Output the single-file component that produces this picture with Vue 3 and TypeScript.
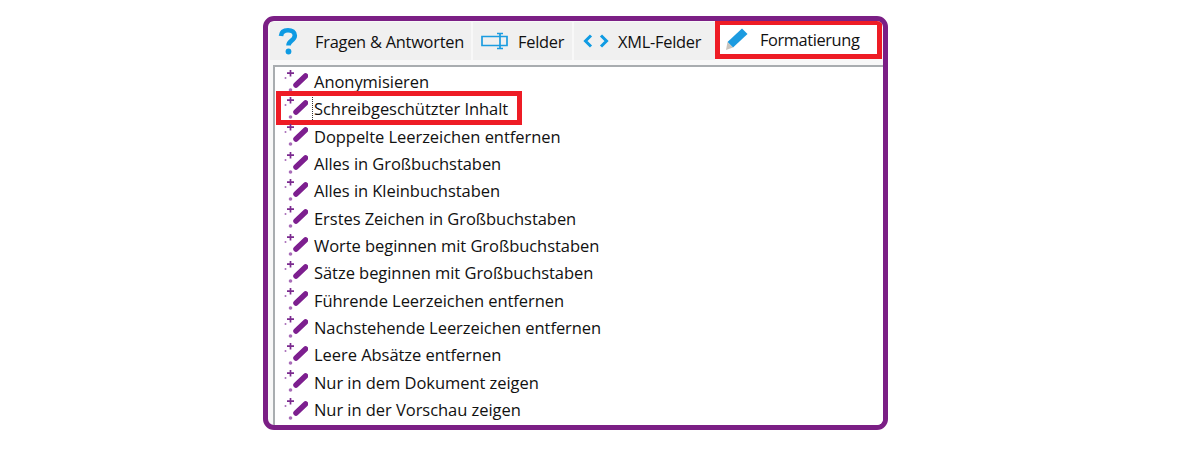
<script setup lang="ts">
const actions: string[] = [
  'Anonymisieren',
  'Schreibgeschützter Inhalt',
  'Doppelte Leerzeichen entfernen',
  'Alles in Großbuchstaben',
  'Alles in Kleinbuchstaben',
  'Erstes Zeichen in Großbuchstaben',
  'Worte beginnen mit Großbuchstaben',
  'Sätze beginnen mit Großbuchstaben',
  'Führende Leerzeichen entfernen',
  'Nachstehende Leerzeichen entfernen',
  'Leere Absätze entfernen',
  'Nur in dem Dokument zeigen',
  'Nur in der Vorschau zeigen',
]
</script>

<template>
  <div class="page">
    <div class="frame">
      <div class="tabs">
        <div class="tab tab-qa">
          <svg class="icon-help" width="20" height="28" viewBox="0 0 20 28">
            <path d="M3 9C3.300 5 6 3.200 10 3.200c4 0 6.800 2.100 6.800 5.300 0 2.700-1.600 4-3.500 5.400-1.900 1.400-2.800 2.300-2.800 4.600" fill="none" stroke="#0f9be3" stroke-width="4.600" />
            <circle cx="10.500" cy="24.500" r="2.900" fill="#0f9be3" />
          </svg>
          <span>Fragen &amp; Antworten</span>
        </div>
        <div class="tab tab-fields">
          <svg width="28" height="18" viewBox="0 0 28 18">
            <path d="M1 4.500h25v9H1zM16 1.500h6M19 1.500v15M16 16.500h6" fill="none" stroke="#1b9ce0" stroke-width="1.700" />
          </svg>
          <span>Felder</span>
        </div>
        <div class="tab tab-xml">
          <svg width="26" height="14" viewBox="0 0 26 14">
            <path d="M8 1.500 2.500 7 8 12.500M18 1.500 23.500 7 18 12.500" fill="none" stroke="#0f9be3" stroke-width="3" />
          </svg>
          <span>XML-Felder</span>
        </div>
        <div class="tab tab-format">
          <svg width="24" height="24" viewBox="0 0 24 24">
            <path d="M17 1.500 22.500 7 8 20.500 2.500 15z" fill="#1c9be0" />
            <path d="M2.500 15 8 20.500 1 23z" fill="#c9c4bd" />
          </svg>
          <span>Formatierung</span>
          <div class="mark mark-tab"></div>
        </div>
      </div>
      <ul class="list">
        <li v-for="(label, i) in actions" :key="label" class="row">
          <svg class="wand" width="24" height="24" viewBox="0 0 24 24">
            <path d="M6.500 0v6.500M3 3.200h7" stroke="#7b2a8f" stroke-width="1.700" />
            <path d="M21.500 6 12 15" stroke="#7d1f8f" stroke-width="5.500" stroke-linecap="round" />
            <circle cx="6.500" cy="20" r="1.800" fill="#a86cb8" />
            <circle cx="1.500" cy="8" r="1" fill="#a86cb8" />
          </svg>
          <span class="label" :class="{ focused: i === 1 }">{{ label }}</span>
          <div v-if="i === 1" class="mark mark-row"></div>
        </li>
      </ul>
    </div>
  </div>
</template>

<style scoped>
.page {
  width: 1200px;
  height: 460px;
  box-sizing: border-box;
  padding-top: 16px;
  padding-left: 263px;
  background: #fff;
}

.frame {
  width: 625px;
  height: 414px;
  box-sizing: border-box;
  border: 5px solid #7b1f85;
  border-radius: 11px;
  background: #f8f8f8;
  overflow: hidden;
  font-family: "Open Sans", "Noto Sans", sans-serif;
  color: #111;
}

.tabs {
  display: flex;
  height: 39px;
  padding-top: 1px;
  gap: 2px;
  box-sizing: border-box;
  margin-left: 2px;
}

.tab {
  display: flex;
  align-items: center;
  background: #f0f0f0;
  font-size: 16.4px;
  letter-spacing: -0.25px;
  white-space: nowrap;
  position: relative;
}

.tab-qa {
  width: 201px;
  padding-left: 8px;
  gap: 17px;
  box-sizing: border-box;
}

.tab-fields {
  width: 99px;
  padding-left: 8px;
  gap: 9px;
  box-sizing: border-box;
}

.tab-xml {
  width: 141px;
  padding-left: 9px;
  gap: 9px;
  box-sizing: border-box;
}

.tab-format {
  width: 161px;
  padding-left: 8px;
  gap: 11px;
  box-sizing: border-box;
  background: #fff;
  margin-top: -1px;
  height: 36px;
  letter-spacing: -0.4px;
}

.list {
  list-style: none;
  margin: 5px 0 0 5px;
  padding: 1px 0 0 9px;
  height: 400px;
  background: #fff;
  border-top: 2px solid #a9adb0;
  border-left: 2px solid #a9adb0;
}

.row {
  display: flex;
  align-items: center;
  height: 27.33px;
  gap: 5px;
  position: relative;
  font-size: 16.5px;
  letter-spacing: -0.05px;
  white-space: nowrap;
}

.wand {
  flex: none;
}

.label {
  padding-left: 1px;
}

.focused {
  margin-left: -1px;
  border-left: 1px dotted #333;
}

.mark {
  position: absolute;
  border: 5px solid #ee1c25;
  box-sizing: border-box;
  pointer-events: none;
}

.mark-tab {
  left: -2px;
  top: -1px;
  width: 167px;
  height: 39px;
}

.mark-row {
  left: -8px;
  top: -4px;
  width: 246px;
  height: 34px;
}
</style>
